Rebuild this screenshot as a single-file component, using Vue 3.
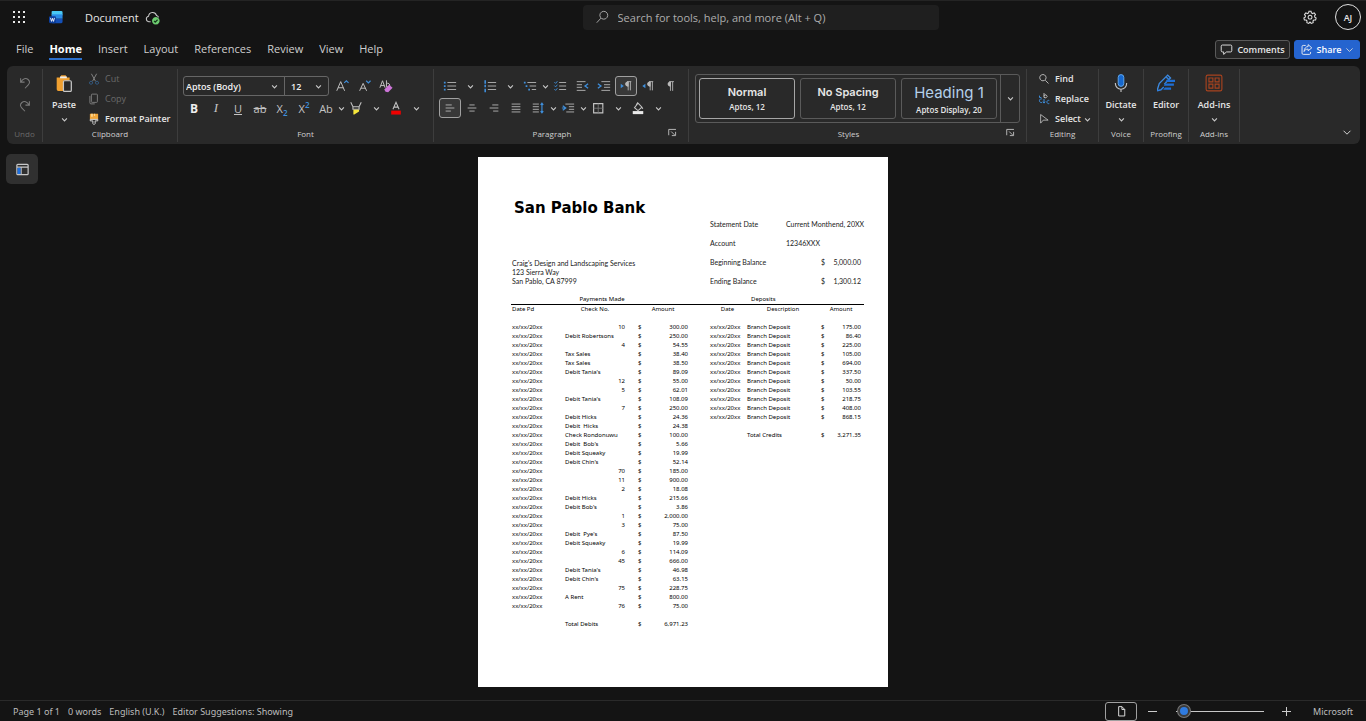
<script setup>
import { h, ref } from 'vue'

const G = '#b9b9b9'
const B = '#3f8fdc'
const s = (d, c = G, w = 1) => ({ d, stroke: c, 'stroke-width': w, fill: 'none' })
const f = (d, c = G) => ({ d, fill: c, stroke: 'none' })
const dots = (xs, ys, c) => f(xs.flatMap((x, i) => (Array.isArray(ys[0]) ? ys[i] : ys).map((y) => `M${x} ${y}h2v2h-2z`)).join(''), c)
const pilcrow = 'M9 3h5M10.500 3v10M13 3v10M10 3.500a2 2 0 0 0 0 4.500'

const shapes = {
  undo: [s('M3 2.500V7h4.500M3.500 6.500c2-3.500 5.500-4.500 8-2.500s2 4.500 0 6.500L8 14', '#7a7a7a', 1.200)],
  redo: [s('M13 2.500V7H8.500M12.500 6.500c-2-3.500-5.500-4.500-8-2.500s-2 4.500 0 6.500L8 14', '#7a7a7a', 1.200)],
  cut: [s('M4.500 1l5.500 10M11.500 1L6 11', '#8a8a8a', 1.200), s('M4 11a2 2 0 1 0 .1 0zM12 11a2 2 0 1 0 .1 0z', '#35628f', 1.300)],
  copy: [s('M5.500 1.500h6a1 1 0 0 1 1 1v9a1 1 0 0 1-1 1h-6a1 1 0 0 1-1-1v-9a1 1 0 0 1 1-1zM2.500 4v9a1.500 1.500 0 0 0 1.500 1.500h5', '#7a7a7a', 1.300)],
  painter: [f('M2.500 1h11v7.500h-11z', '#f0a63a'), f('M4 1h2.500v4H4zM8 1h1.500v3H8z', '#fbd38b'), s('M3 8.500h10v2H9.500V14L8 15.500 6.500 14v-3.500H3z', '#d8d8d8', 1.3)],
  grow: [s('M2 13.500L6.500 3 11 13.500M3.500 10h6', '#c4c4c4', 1.100), s('M10.500 4.500L13 2l2.500 2.500', B, 1.3)],
  shrink: [s('M3 13.500L7 5l4 8.500M4.500 10.500h5', '#c4c4c4', 1.100), s('M10.500 2L13 4.500 15.500 2', B, 1.3)],
  clear: [s('M1 10L4 2l3 8M2 7.500h4M8.500 1.500V9M8.500 6a2 2 0 1 1 0 2', '#c4c4c4', 1.100), f('M6 12l5.500-5.500 4 3.500-5 5-3-.5z', '#cd75d8')],
  marker: [s('M2 1.500l2.500 5h7l2.500-5M4.500 6.500v3h7v-3', '#c4c4c4', 1.200), f('M5 10h6.500v2L6 15.500H5z', '#f5e63c')],
  fontcolor: [s('M4.500 9.500L8 1.500l3.500 8M5.800 7h4.500', '#c4c4c4', 1.200), f('M2.500 11h11v4.500h-11z', '#f00000')],
  bullets: [dots([1], [3, 7, 11], B), s('M5 4h10M5 8h10M5 12h10')],
  numbers: [s('M2.500 1.500v4M2.500 6.500v3M2.500 11v4', B, 1.800), s('M5.500 4H15M5.500 8H15M5.500 12H15')],
  multi: [dots([1, 3, 6], [[3], [7], [11]], B), s('M5 4h10M7.500 8H15M10 12h5')],
  checklist: [s('M1.500 3.500L3 5l2-2.500M1.500 7.500L3 9l2-2.500M1.500 11.500L3 13l2-2.500', B), s('M7 4h8M7 8h8M7 12h8')],
  outdent: [s('M2 3h10M2 6.500h6M2 9.500h6M2 13h10'), s('M15 5.500L11.500 8l3.500 2.500', B, 1.500)],
  indent: [s('M5 3h10M8 6.500h7M8 9.500h7M5 13h10'), s('M1 5.500L4.500 8 1 10.500', B, 1.500)],
  ltr: [f('M2 5.500L5.500 8 2 10.500z', B), f('M11 3H9.500a2.800 2.800 0 0 0 0 5.500H11z'), s(pilcrow)],
  rtl: [f('M5 5.500L1.500 8 5 10.500z', B), f('M11 3H9.500a2.800 2.800 0 0 0 0 5.500H11z'), s(pilcrow)],
  pilcrow: [f('M9 3H7.500a2.800 2.800 0 0 0 0 5.500H9z'), s('M7 3h5.500M8.500 3v10.500M11 3v10.500')],
  left: [s('M3 4.500h7M3 8h10M3 11.500h6')],
  center: [s('M5 4.500h6M3 8h10M5 11.500h6')],
  right: [s('M6 4.500h7M3 8h10M7 11.500h6')],
  justify: [s('M3 3.500h10M3 6.500h10M3 9.500h10M3 12.500h10')],
  spacing: [s('M2 3.500h7M2 6.500h7M2 9.500h7M2 12.500h7'), s('M12.500 2v12M11 4.500l1.500-2 1.500 2M11 11.500l1.500 2 1.500-2', B, 1.300)],
  tabindent: [s('M5 3.500h10M9 6.500h6M9 9.500h6M6 12.500h9'), s('M2 5.500L5.500 8 2 10.500M1 8h4', B, 1.300)],
  borders: [s('M3 3h10.500v10.500H3z', '#c4c4c4', 1.300), s('M8.250 3v10.500M3 8.250h10.500', '#777')],
  shade: [s('M8 2.500l4.500 4.500L8 11 4 7.500zM6 4.500L7.500 2l2 2M12.500 7l1 2', '#c4c4c4', 1.200), f('M2 11.500h12v3.500H2z', '#e8e8e8')],
  find: [s('M6.500 2a4.200 4.200 0 1 0 .1 0zM9.700 9.700L14 14', '#c4c4c4', 1.200)],
  search: [s('M10 1.500a4.500 4.500 0 1 0 .1 0zM6.800 9.300L2 14.500', '#b5b5b5')],
  replace: [s('M8 0v6M8 4a2 2 0 1 1 0 1', '#c4c4c4', 1.200), s('M5.500 8a2.500 2.500 0 1 0 0 4.500M15 10a2.200 2.200 0 1 0 0 4M2 3.500v2.500h2.500M8 8v5M6.500 11.500L8 13.500l1.500-2', B, 1.300)],
  select: [s('M3.500 2v11.500L7 9.500h6.500z', '#c4c4c4', 1.100)],
  launcher: [s('M2.500 12V3.500H13M6 6.500l5 5M7 12.500h5.500V7', '#c4c4c4', 1.300)],
  comment: [s('M3 2.500h10a1.500 1.500 0 0 1 1.500 1.500v5.500A1.500 1.500 0 0 1 13 11H8l-3.500 3v-3H3a1.500 1.500 0 0 1-1.500-1.500V4A1.500 1.500 0 0 1 3 2.500z', '#ddd', 1.200)],
  share: [s('M7 3H4a1.500 1.500 0 0 0-1.500 1.500v8A1.500 1.500 0 0 0 4 14h7.500a1.500 1.500 0 0 0 1.500-1.500V11M10 2l4.500 4L10 9.500v-2c-2.500 0-4 .8-5 3 .2-3.500 2-6 5-6.200z', '#f4f4f4', 1.100)],
  chev: [s('M4.500 6.500L8 10l3.500-3.500', '#c8c8c8', 1.600)],
  bigchev: [s('M2.500 6L8 11.500 13.500 6', '#ddd', 1.500)],
  gear: [s('M6.800 1.500h2.400l.4 1.900 1.400.7 1.800-.8 1.500 1.900-1.100 1.600.3 1.400 1.500 1-.6 2.200-2 .1-1 1.100.2 1.900-2.200.8L8 13.800l-1.400 1.500-2.200-.8.2-1.900-1-1.100-2-.1L1 9.200l1.500-1 .3-1.400-1.100-1.600 1.500-1.900 1.800.8 1.400-.7zM8 6a2.200 2.200 0 1 0 .1 0z', '#e0e0e0', 1.200)],
  paste: [f('M1.500 3h3l1-2h4l1 2H13v3H8v9H3A1.500 1.500 0 0 1 1.500 13.500z', '#f0a030'), s('M4.500 3h6', '#eee', 1.600), f('M7.500 6h7v10h-7z', '#292929'), s('M8.500 6h5a1 1 0 0 1 1 1v7.500a1 1 0 0 1-1 1h-5a1 1 0 0 1-1-1V7a1 1 0 0 1 1-1z', '#c8c8c8', 1.100)],
  mic: [f('M5.500 3a2.500 2.500 0 0 1 5 0v5.500a2.500 2.500 0 0 1-5 0z', '#1668cf'), s('M5.500 3a2.500 2.500 0 0 1 5 0v5.500a2.500 2.500 0 0 1-5 0z', '#67aef2', 0.800), s('M3 8v.5a5 5 0 0 0 10 0V8M8 13.500V16', '#c4c4c4')],
  editor: [s('M0 15l2-6.500L9.500 1 12 3.500 6.500 9', '#3d8ae0', 1.200), s('M0 15l3.500-1L6 11.500M8 2.500L10.500 5', '#2f7fdd', 1.300), f('M8.500 5H16v2H7.500zM7 8.500h8v2H6zM7 12h5.500v2H5.500z', '#1f6fd6')],
  addins: [s('M2.500 1h11A1.500 1.500 0 0 1 15 2.500v11a1.500 1.500 0 0 1-1.500 1.500h-11A1.500 1.500 0 0 1 1 13.500v-11A1.500 1.500 0 0 1 2.500 1zM3.500 3.500h3.500V7H3.500zM9 3.500h3.500V7H9zM3.500 9H7v3.500H3.500zM9 9h3.500v3.500H9z', '#a8431f')],
  nav: [s('M3 2.500h10a1 1 0 0 1 1 1v9a1 1 0 0 1-1 1H3a1 1 0 0 1-1-1v-9a1 1 0 0 1 1-1zM2 5.500h12M6.500 5.500v8', '#c8c8c8', 1.300), f('M2.700 6.200h3.200v6.600H2.700z', '#1d6fe0')],
  cloud: [s('M6 12.500H4a3 3 0 0 1-.2-5.900 4.300 4.300 0 0 1 8.400-.8 3 3 0 0 1 2.300 2', '#c8c8c8', 1.100), f('M11.500 7.500a4 4 0 1 0 .1 0z', '#6ccb6f'), s('M9.600 11.700l1.300 1.300 2.500-2.600', '#14351a', 1.200)],
  file: [s('M4.500 2h4l3.500 3.500v8H4.500zM8.500 2v3.500H12', '#ddd', 1.200)],
  waffle: [dots([2, 7, 12], [2, 7, 12], '#e8e8e8')],
  word: [f('M4 1h10a1.500 1.500 0 0 1 1.500 1.500V6H3V2a1 1 0 0 1 1-1z', '#49c8f4'), f('M3 5h12.500v5H3z', '#2b8be6'), f('M3 10h12.500v3.500A1.500 1.500 0 0 1 14 15H4a1 1 0 0 1-1-1z', '#1450b8'), f('M1.500 7h5A1.500 1.500 0 0 1 8 8.500v5A1.500 1.500 0 0 1 6.500 15h-5A1.500 1.500 0 0 1 0 13.500v-5A1.500 1.500 0 0 1 1.500 7z', '#0d3f9e'), s('M1.700 9l1.200 4L4 9.500 5.100 13l1.200-4', '#fff', 1)],
}

const Icon = ({ name, size = 14 }) =>
  h('svg', { width: size, height: size, viewBox: '0 0 16 16', 'aria-hidden': 'true' }, shapes[name].map((p) => h('path', p)))
Icon.props = ['name', 'size']

const tabs = ['File', 'Home', 'Insert', 'Layout', 'References', 'Review', 'View', 'Help']
const fontName = ref('Aptos (Body)')
const fontSize = ref('12')
const zoomLevel = ref(3)

const paraTop = [
  ['bullets', 'wide'], ['numbers', 'wide'], ['multi', 'tight'], ['checklist'], ['outdent'], ['indent'],
  ['ltr', '', true], ['rtl'], ['pilcrow'],
]
const paraBottom = [
  ['left', '', true], ['center'], ['right'], ['justify'], ['spacing', 'tight'], ['tabindent', 'tight'],
  ['borders', 'wide'], ['shade', 'wide'],
]

const payments = [
  ['10', '300.00'], ['Debit Robertsons', '250.00'], ['4', '54.55'], ['Tax Sales', '38.40'], ['Tax Sales', '38.50'],
  ["Debit Tania's", '89.09'], ['12', '55.00'], ['5', '62.01'], ["Debit Tania's", '108.09'], ['7', '250.00'],
  ['Debit Hicks', '24.36'], ['Debit  Hicks', '24.38'], ['Check Rondonuwu', '100.00'], ["Debit  Bob's", '5.66'],
  ['Debit Squeaky', '19.99'], ["Debit Chin's", '52.14'], ['70', '185.00'], ['11', '900.00'], ['2', '18.08'],
  ['Debit Hicks', '215.66'], ["Debit Bob's", '3.86'], ['1', '2,000.00'], ['3', '75.00'], ["Debit  Pye's", '87.50'],
  ['Debit Squeaky', '19.99'], ['6', '114.09'], ['45', '666.00'], ["Debit Tania's", '46.98'], ["Debit Chin's", '63.15'],
  ['75', '228.75'], ['A Rent', '800.00'], ['76', '75.00'],
]
const deposits = ['175.00', '86.40', '225.00', '105.00', '694.00', '337.50', '50.00', '103.55', '218.75', '408.00', '868.15']
const isNumber = (v) => /^\d+$/.test(v)
</script>

<template>
  <div class="app">
    <header class="titlebar">
      <div class="brand">
        <button class="plain waffle" aria-label="App launcher"><Icon name="waffle" :size="16" /></button>
        <Icon name="word" :size="14" />
        <span class="docname">Document</span>
        <Icon name="cloud" :size="15" />
      </div>
      <label class="search">
        <Icon name="search" :size="14" />
        <input type="text" aria-label="Search" placeholder="Search for tools, help, and more (Alt + Q)" />
      </label>
      <div class="account">
        <button class="plain" aria-label="Settings"><Icon name="gear" :size="14" /></button>
        <button class="avatar">AJ</button>
      </div>
    </header>

    <div class="tabrow">
      <nav class="tabs">
        <a v-for="t in tabs" :key="t" href="#" :class="{ on: t === 'Home' }">{{ t }}</a>
      </nav>
      <div class="actions">
        <button class="comments"><Icon name="comment" :size="13" />Comments</button>
        <button class="share"><Icon name="share" :size="13" />Share<Icon name="bigchev" :size="9" /></button>
      </div>
    </div>

    <section class="ribbon">
      <div class="group g-undo">
        <div class="stack dim">
          <button class="plain" aria-label="Undo"><Icon name="undo" :size="14" /></button>
          <button class="plain" aria-label="Redo"><Icon name="redo" :size="14" /></button>
        </div>
        <h2 class="dim">Undo</h2>
      </div>

      <div class="group g-clip">
        <div class="clip">
          <button class="big paste"><Icon name="paste" :size="18" /><span>Paste</span><Icon name="chev" :size="11" /></button>
          <div class="cliplist">
            <button class="item dim"><Icon name="cut" :size="12" />Cut</button>
            <button class="item dim"><Icon name="copy" :size="12" />Copy</button>
            <button class="item"><Icon name="painter" :size="12" />Format Painter</button>
          </div>
        </div>
        <h2>Clipboard</h2>
      </div>

      <div class="group g-font">
        <div class="tools">
          <div class="row">
            <div class="pick name">
              <select v-model="fontName" aria-label="Font"><option>Aptos (Body)</option></select>
              <Icon name="chev" :size="11" />
            </div>
            <div class="pick size">
              <select v-model="fontSize" aria-label="Font size"><option>12</option></select>
              <Icon name="chev" :size="11" />
            </div>
            <button class="cell" aria-label="Grow font"><Icon name="grow" /></button>
            <button class="cell" aria-label="Shrink font"><Icon name="shrink" /></button>
            <button class="cell" aria-label="Clear formatting"><Icon name="clear" /></button>
          </div>
          <div class="row">
            <button class="cell"><b>B</b></button>
            <button class="cell"><i>I</i></button>
            <button class="cell"><u>U</u></button>
            <button class="cell"><s>ab</s></button>
            <button class="cell"><span>X<sub>2</sub></span></button>
            <button class="cell"><span>X<sup>2</sup></span></button>
            <button class="cell">Ab</button>
            <button class="arrow tight" aria-label="Case options"><Icon name="chev" :size="11" /></button>
            <button class="cell" aria-label="Highlight"><Icon name="marker" /></button>
            <button class="arrow wide" aria-label="Highlight colours"><Icon name="chev" :size="11" /></button>
            <button class="cell" aria-label="Font colour"><Icon name="fontcolor" /></button>
            <button class="arrow wide" aria-label="Font colours"><Icon name="chev" :size="11" /></button>
          </div>
        </div>
        <h2>Font</h2>
      </div>

      <div class="group g-para">
        <div class="tools">
          <div v-for="(row, i) in [paraTop, paraBottom]" :key="i" class="row">
            <template v-for="[name, arrow, on] in row" :key="name">
              <button class="cell" :class="{ pressed: on }" :aria-label="name"><Icon :name="name" /></button>
              <button v-if="arrow" class="arrow" :class="arrow" :aria-label="name + ' options'"><Icon name="chev" :size="11" /></button>
            </template>
          </div>
        </div>
        <h2>Paragraph</h2>
        <button class="plain corner" aria-label="Paragraph settings"><Icon name="launcher" :size="11" /></button>
      </div>

      <div class="group g-styles">
        <div class="gallery">
          <button class="style current"><strong>Normal</strong><span>Aptos, 12</span></button>
          <button class="style"><strong>No Spacing</strong><span>Aptos, 12</span></button>
          <button class="style heading"><strong>Heading 1</strong><span>Aptos Display, 20</span></button>
          <button class="more" aria-label="More styles"><Icon name="chev" :size="11" /></button>
        </div>
        <h2>Styles</h2>
        <button class="plain corner" aria-label="Style settings"><Icon name="launcher" :size="11" /></button>
      </div>

      <div class="group g-edit">
        <div class="editlist">
          <button class="item"><Icon name="find" :size="12" />Find</button>
          <button class="item"><Icon name="replace" :size="12" />Replace</button>
          <button class="item"><Icon name="select" :size="12" /><span>Select</span><Icon name="chev" :size="11" /></button>
        </div>
        <h2>Editing</h2>
      </div>

      <div class="group g-voice">
        <button class="big"><Icon name="mic" :size="18" /><span>Dictate</span><Icon name="chev" :size="11" /></button>
        <h2>Voice</h2>
      </div>
      <div class="group g-voice">
        <button class="big"><Icon name="editor" :size="18" /><span>Editor</span></button>
        <h2>Proofing</h2>
      </div>
      <div class="group g-addins">
        <button class="big"><Icon name="addins" :size="18" /><span>Add-ins</span><Icon name="chev" :size="11" /></button>
        <h2>Add-ins</h2>
      </div>
      <button class="plain collapse" aria-label="Collapse ribbon"><Icon name="bigchev" :size="10" /></button>
    </section>

    <main class="canvas">
      <button class="navpane" aria-label="Navigation pane"><Icon name="nav" :size="15" /></button>
      <article class="page">
        <h1>San Pablo Bank</h1>
        <div class="info">
          <address>
            Craig's Design and Landscaping Services<br />123 Sierra Way<br />San Pablo, CA 87999
          </address>
          <dl>
            <dt>Statement Date</dt><dd>Current Monthend, 20XX</dd>
            <dt>Account</dt><dd>12346XXX</dd>
            <dt>Beginning Balance</dt><dd class="sum"><span>$</span><span>5,000.00</span></dd>
            <dt>Ending Balance</dt><dd class="sum"><span>$</span><span>1,300.12</span></dd>
          </dl>
        </div>
        <div class="ledger">
          <table class="paid">
            <colgroup><col class="c-date" /><col class="c-check" /><col class="c-cur" /><col class="c-amt" /><col /></colgroup>
            <thead>
              <tr class="top"><th></th><th colspan="2" class="title">Payments Made</th><th colspan="2"></th></tr>
              <tr><th class="start">Date Pd</th><th>Check No.</th><th colspan="2" class="amount">Amount</th><th></th></tr>
            </thead>
            <tbody>
              <tr class="blank"><td colspan="5"></td></tr>
              <tr v-for="([what, amount], i) in payments" :key="i">
                <td>xx/xx/20xx</td><td :class="{ num: isNumber(what) }">{{ what }}</td><td class="cur">$</td><td class="num">{{ amount }}</td><td></td>
              </tr>
              <tr class="blank"><td colspan="5"></td></tr>
              <tr><td></td><td>Total Debits</td><td class="cur">$</td><td class="num">6,971.23</td><td></td></tr>
            </tbody>
          </table>
          <table class="received">
            <colgroup><col class="c-date" /><col class="c-desc" /><col class="c-cur" /><col class="c-amt" /><col /></colgroup>
            <thead>
              <tr class="top"><th></th><th class="deposits">Deposits</th><th colspan="3"></th></tr>
              <tr><th>Date</th><th>Description</th><th colspan="2">Amount</th><th></th></tr>
            </thead>
            <tbody>
              <tr class="blank"><td colspan="5"></td></tr>
              <tr v-for="(amount, i) in deposits" :key="i">
                <td>xx/xx/20xx</td><td>Branch Deposit</td><td>$</td><td class="num">{{ amount }}</td><td></td>
              </tr>
              <tr class="blank"><td colspan="5"></td></tr>
              <tr><td></td><td>Total Credits</td><td>$</td><td class="num">3,271.35</td><td></td></tr>
            </tbody>
          </table>
        </div>
      </article>
    </main>

    <footer class="status">
      <div class="facts">
        <span>Page 1 of 1</span><span>0 words</span><span>English (U.K.)</span><span>Editor Suggestions: Showing</span>
      </div>
      <div class="zoom">
        <button class="layout" aria-label="Print layout"><Icon name="file" :size="13" /></button>
        <button class="plain step minus" aria-label="Zoom out"></button>
        <input v-model="zoomLevel" type="range" min="0" max="100" aria-label="Zoom" />
        <button class="plain step plus" aria-label="Zoom in"></button>
        <span class="vendor">Microsoft</span>
      </div>
    </footer>
  </div>
</template>

<style>
body {
  background: #141414;
}
</style>

<style scoped>
.app {
  min-height: 100vh;
  display: flex;
  flex-direction: column;
  box-sizing: border-box;
  border-top: 1px solid #242424;
  background: #141414;
  color: #e6e6e6;
  font-family: "Open Sans", "Noto Sans", sans-serif;
  font-size: 11px;
}
svg {
  display: block;
  flex: none;
}
button {
  font: inherit;
  color: inherit;
  background: none;
  border: 0;
  padding: 0;
}
h1, h2, dl, dd, address {
  margin: 0;
  font-style: normal;
}

.titlebar {
  display: grid;
  grid-template-columns: 571fr 356px 422fr;
  align-items: center;
  height: 32px;
  padding: 0 5px 0 11px;
}
.brand {
  display: flex;
  align-items: center;
}
.waffle {
  width: 16px;
  margin-right: 22px;
}
.docname {
  margin: 0 6px 0 22px;
}
.search {
  display: flex;
  align-items: center;
  gap: 9px;
  height: 25px;
  padding: 0 12px;
  border-radius: 4px;
  background: #1f1f1f;
}
.search input {
  flex: 1;
  min-width: 0;
  padding: 0;
  border: 0;
  outline: 0;
  background: none;
  font: inherit;
}
.search input::placeholder {
  color: #adadad;
  opacity: 1;
}
.account {
  display: flex;
  justify-content: flex-end;
  align-items: center;
  gap: 18px;
}
.avatar {
  width: 26px;
  height: 26px;
  border: 1px solid #e0e0e0;
  border-radius: 50%;
  font-size: 9px;
  font-weight: 600;
}

.tabrow {
  display: flex;
  justify-content: space-between;
  align-items: center;
  height: 32px;
  padding: 0 6px 0 16px;
}
.tabs {
  display: flex;
  gap: 16px;
}
.tabs a {
  padding: 4px 0 2px;
  line-height: 14px;
  border-bottom: 2px solid transparent;
  color: #cfcfcf;
  text-decoration: none;
}
.tabs .on {
  border-color: #2b6fcb;
  color: #fff;
  font-weight: 700;
}
.actions {
  display: flex;
  gap: 4px;
}
.actions button {
  display: flex;
  align-items: center;
  justify-content: center;
  gap: 4px;
  height: 19px;
  box-sizing: border-box;
  border: 1px solid #5a5a5a;
  border-radius: 3px;
  font-size: 9px;
  font-weight: 600;
}
.actions .comments {
  width: 75px;
  background: #242424;
}
.actions .share {
  width: 66px;
  border-color: #2564cf;
  background: #2564cf;
  color: #fff;
}

.ribbon {
  display: flex;
  margin: 1px 6px 0 7px;
  height: 78px;
  padding: 3px 0 2px;
  box-sizing: border-box;
  border-radius: 6px;
  background: #292929;
  font-size: 9px;
  font-weight: 600;
}
.group {
  position: relative;
  display: flex;
  flex-direction: column;
  box-sizing: border-box;
  border-right: 1px solid #3d3d3d;
}
.group h2 {
  margin-top: auto;
  font-size: 8px;
  font-weight: 400;
  line-height: 16px;
  text-align: center;
  color: #d0d0d0;
}
.group .dim,
.group h2.dim {
  color: #6a6a6a;
  font-weight: 400;
}
.g-undo { width: 36px; }
.g-clip { width: 135px; }
.g-font { width: 256px; }
.g-para { width: 255px; }
.g-styles { width: 338px; }
.g-edit { width: 72px; }
.g-voice { width: 45px; }
.g-addins { width: 51px; }
.g-para h2,
.g-styles h2 {
  padding-right: 18px;
}
.stack {
  display: flex;
  flex-direction: column;
  align-items: center;
  gap: 9px;
  padding-top: 7px;
}
.clip {
  display: flex;
}
.big {
  display: flex;
  flex-direction: column;
  align-items: center;
  padding-top: 5px;
  line-height: 14px;
}
.big span {
  margin: 6px 0 2px;
}
.paste {
  width: 42px;
}
.cliplist,
.editlist {
  display: flex;
  flex-direction: column;
  gap: 6px;
  padding: 3px 0 0 3px;
}
.item {
  display: flex;
  align-items: center;
  gap: 5px;
  line-height: 14px;
  white-space: nowrap;
}
.editlist {
  padding-left: 11px;
}
.editlist .item span {
  margin-right: -4px;
}

.tools {
  display: flex;
  flex-direction: column;
  gap: 2px;
  padding: 7px 0 0 5px;
}
.row {
  display: flex;
  align-items: center;
  height: 20px;
}
.pick {
  display: flex;
  align-items: center;
  position: relative;
  height: 20px;
  box-sizing: border-box;
  border: 1px solid #666;
}
.pick svg {
  position: absolute;
  right: 4px;
  pointer-events: none;
}
.pick select {
  width: 100%;
  height: 100%;
  padding: 0 0 0 2px;
  border: 0;
  appearance: none;
  background: none;
  color: #f0f0f0;
  font: inherit;
}
.pick.name {
  width: 102px;
  border-radius: 3px 0 0 3px;
}
.pick.size {
  width: 45px;
  margin: 0 2px 0 -1px;
  border-radius: 0 3px 3px 0;
}
.pick.size select {
  padding-left: 6px;
}
.cell,
.arrow {
  display: flex;
  align-items: center;
  justify-content: center;
  height: 20px;
  box-sizing: border-box;
}
.cell {
  width: 22px;
  font-size: 11px;
  font-weight: 400;
  color: #c4c4c4;
}
.cell b {
  font-size: 12px;
  color: #eee;
}
.cell i {
  font-family: "Liberation Serif", serif;
  font-size: 13px;
}
.cell sub,
.cell sup {
  font-size: 8px;
  font-weight: 600;
  line-height: 0;
  color: #3f8fdc;
}
.cell.pressed {
  border: 1px solid #a0a0a0;
  border-radius: 3px;
  background: #383838;
}
.arrow.tight { width: 8px; }
.arrow.wide { width: 18px; }
.corner {
  position: absolute;
  right: 10px;
  bottom: 4px;
}

.gallery {
  display: flex;
  gap: 5px;
  height: 49px;
  box-sizing: border-box;
  margin: 5px 6px 0;
  padding: 3px 0 3px 3px;
  border: 1px solid #5a5a5a;
  border-radius: 3px;
}
.style {
  display: flex;
  flex: 1;
  flex-direction: column;
  align-items: center;
  justify-content: center;
  border: 1px solid #5a5a5a;
  border-radius: 3px;
  font-size: 8px;
  line-height: 12px;
}
.style.current {
  border-color: #a6a6a6;
}
.style strong {
  font-family: Inter, sans-serif;
  font-size: 11px;
  font-weight: 600;
  line-height: 17px;
}
.style.heading strong {
  font-size: 15px;
  font-weight: 400;
  line-height: 22px;
  color: #b4d0ea;
}
.more {
  display: flex;
  align-items: center;
  justify-content: center;
  width: 19px;
  margin: -3px 0 -3px -2px;
  border-left: 1px solid #5a5a5a;
}
.collapse {
  align-self: flex-end;
  margin: 0 8px 5px auto;
}

.canvas {
  position: relative;
  flex: 1;
  display: flex;
  justify-content: center;
  align-items: flex-start;
  padding: 13px 0;
}
.navpane {
  position: absolute;
  left: 6px;
  top: 10px;
  display: flex;
  align-items: center;
  justify-content: center;
  width: 32px;
  height: 30px;
  border-radius: 5px;
  background: #303030;
}
.page {
  width: 410px;
  min-height: 530px;
  box-sizing: border-box;
  padding: 42px 24px 20px 33px;
  background: #fff;
  color: #1a1a1a;
  font-family: Lato, "Open Sans", sans-serif;
  font-size: 7px;
}
.page h1 {
  margin-left: 3px;
  font-family: "Arial Black", "DejaVu Sans", sans-serif;
  font-size: 15px;
  font-weight: 900;
  line-height: 18px;
  color: #000;
}
.info {
  display: flex;
  justify-content: space-between;
  align-items: flex-end;
  padding: 3px 0 9px 1px;
  line-height: 9px;
  white-space: nowrap;
}
.info dl {
  display: grid;
  grid-template-columns: 76px 78px;
  row-gap: 10px;
}
.sum {
  display: flex;
  justify-content: space-between;
  padding: 0 3px 0 35px;
}
.ledger {
  display: flex;
  align-items: flex-start;
}
.ledger table {
  table-layout: fixed;
  border-collapse: collapse;
  white-space: pre;
  font-family: "Noto Sans", sans-serif;
  font-size: 6px;
  line-height: 9px;
  color: #000;
}
.paid { width: 198px; }
.received { width: 155px; }
.ledger td,
.ledger th {
  padding: 0 1px;
  font-weight: 400;
  text-align: left;
}
.ledger th {
  text-align: center;
}
.ledger th.start {
  text-align: left;
}
.ledger .top th {
  border-bottom: 1px solid #000;
}
.ledger .title {
  padding-right: 12px;
}
.ledger .amount {
  padding-left: 12px;
}
.ledger .deposits {
  text-align: left;
  padding-left: 5px;
}
.blank td {
  height: 9px;
}
.ledger .num {
  text-align: right;
}
.ledger .cur {
  padding-left: 12px;
}
.paid .c-date { width: 53px; }
.paid .c-check { width: 62px; }
.paid .c-cur { width: 25px; }
.paid .c-amt { width: 38px; }
.received .c-date { width: 37px; }
.received .c-desc { width: 74px; }
.received .c-cur { width: 11px; }
.received .c-amt { width: 31px; }

.status {
  display: flex;
  justify-content: space-between;
  align-items: center;
  height: 21px;
  box-sizing: border-box;
  padding: 0 13px;
  border-top: 1px solid #2a2a2a;
  font-family: "Noto Sans", sans-serif;
  font-size: 9px;
  color: #bdbdbd;
}
.facts {
  display: flex;
  gap: 8px;
}
.zoom {
  display: flex;
  align-items: center;
}
.layout {
  display: flex;
  align-items: center;
  justify-content: center;
  width: 32px;
  height: 19px;
  box-sizing: border-box;
  border: 1px solid #a0a0a0;
  border-radius: 3px;
}
.step {
  width: 9px;
  height: 9px;
  background: linear-gradient(#ccc, #ccc) center / 9px 1px no-repeat;
}
.minus { margin: 0 19px 0 11px; }
.plus {
  margin: 0 22px 0 18px;
  background: linear-gradient(#ccc, #ccc) center / 9px 1px no-repeat, linear-gradient(#ccc, #ccc) center / 1px 9px no-repeat;
}
.zoom input {
  width: 88px;
  height: 14px;
  margin: 0;
  appearance: none;
  background: linear-gradient(#c8c8c8, #c8c8c8) center / 100% 1px no-repeat;
}
.zoom input::-webkit-slider-thumb {
  appearance: none;
  width: 12px;
  height: 12px;
  box-sizing: border-box;
  border: 2px solid #3a3a3a;
  border-radius: 50%;
  background: #2f7be0;
  box-shadow: 0 0 0 1px #777;
}
</style>
